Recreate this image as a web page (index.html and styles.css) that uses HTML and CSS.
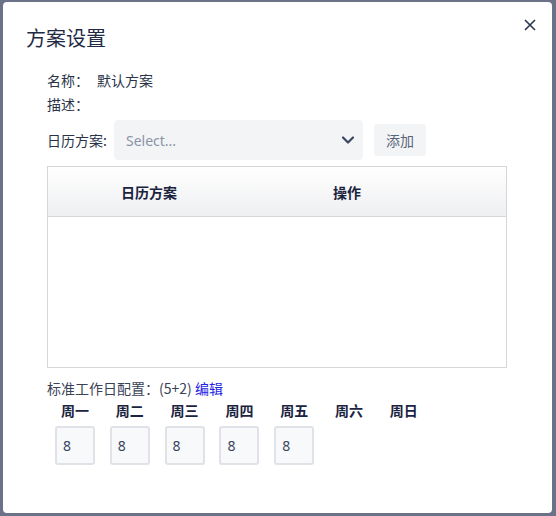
FILE: index.html
```html
<!DOCTYPE html>
<html lang="zh">
<head>
<meta charset="utf-8">
<link rel="stylesheet" href="styles.css">
</head>
<body>
<div class="modal">
  <button class="close" aria-label="close">
    <svg width="12" height="12" viewBox="0 0 12 12"><path d="M1 1L11 11M11 1L1 11" stroke="#2b3550" stroke-width="1.6" fill="none"/></svg>
  </button>
  <h2 class="title">方案设置</h2>
  <div class="body">
    <div class="line"><span class="lbl">名称：</span><span class="val">默认方案</span></div>
    <div class="line"><span class="lbl">描述：</span></div>
    <div class="select-row">
      <span class="lbl2">日历方案:</span>
      <div class="select">
        <span class="placeholder">Select...</span>
        <svg width="14" height="10" viewBox="0 0 14 10"><path d="M2 2.5L7 7.5L12 2.5" stroke="#3a4560" stroke-width="2.2" fill="none" stroke-linecap="round" stroke-linejoin="round"/></svg>
      </div>
      <button class="add">添加</button>
    </div>
    <div class="table">
      <div class="thead">
        <div class="th th1">日历方案</div>
        <div class="th th2">操作</div>
      </div>
      <div class="tbody"></div>
    </div>
    <div class="config">标准工作日配置：(5+2) <a class="edit">编辑</a></div>
    <div class="days">
      <div class="day"><div class="dlabel">周一</div><div class="box">8</div></div>
      <div class="day"><div class="dlabel">周二</div><div class="box">8</div></div>
      <div class="day"><div class="dlabel">周三</div><div class="box">8</div></div>
      <div class="day"><div class="dlabel">周四</div><div class="box">8</div></div>
      <div class="day"><div class="dlabel">周五</div><div class="box">8</div></div>
      <div class="day"><div class="dlabel">周六</div></div>
      <div class="day"><div class="dlabel">周日</div></div>
    </div>
  </div>
</div>
</body>
</html>
```

FILE: styles.css
```css
* { box-sizing: border-box; }
html, body { margin: 0; padding: 0; }
body {
  background: #6b7287;
  width: 556px;
  height: 516px;
  overflow: hidden;
  font-family: "Noto Sans", "Noto Sans CJK SC", sans-serif;
  color: #1f2a44;
}
.modal {
  position: relative;
  margin: 2px 0 0 3px;
  width: 549px;
  height: 511px;
  background: #fff;
  border-radius: 4px;
  padding-top: 22px;
}
.close {
  position: absolute;
  top: 17px;
  right: 16px;
  width: 12px;
  height: 12px;
  padding: 0;
  border: 0;
  background: none;
  display: flex;
}
.title {
  margin: 0 0 0 23px;
  font-size: 20px;
  line-height: 28px;
  font-weight: 400;
  color: #1f2a44;
  font-family: "Noto Sans CJK SC", sans-serif;
}
.body {
  padding: 16px 0 0 44px;
  font-size: 14px;
  font-family: "Noto Sans CJK SC", sans-serif;
}
.line {
  height: 24px;
  line-height: 24px;
  display: flex;
  color: #2a3348;
}
.lbl { width: 50px; }
.select-row {
  margin-top: 4px;
  display: flex;
  align-items: center;
  height: 40px;
}
.lbl2 { width: 67px; color: #2a3348; }
.select {
  width: 249px;
  height: 40px;
  background: #f3f4f6;
  border-radius: 4px;
  display: flex;
  align-items: center;
  justify-content: space-between;
  padding: 0 8px 0 12px;
}
.placeholder {
  color: #8a93a6;
  font-family: "Noto Sans", sans-serif;
  font-size: 14px;
}
.add {
  margin-left: 11px;
  width: 52px;
  height: 32px;
  border: 0;
  border-radius: 3px;
  background: #f3f4f6;
  color: #5a6478;
  font-size: 14px;
  font-family: "Noto Sans CJK SC", sans-serif;
  padding: 0;
}
.table {
  margin-top: 6px;
  width: 460px;
  height: 202px;
  border: 1px solid #d6d6d6;
  display: flex;
  flex-direction: column;
}
.thead {
  height: 50px;
  border-bottom: 1px solid #d6d6d6;
  background: linear-gradient(#ffffff, #eeeff1);
  display: flex;
  align-items: center;
}
.th {
  font-weight: 700;
  font-size: 14px;
  color: #1a2440;
}
.th1 { padding-left: 73px; width: 285px; }
.th2 { padding-left: 0; }
.tbody { flex: 1; }
.config {
  margin-top: 10px;
  line-height: 20px;
  color: #3a4256;
}
.edit { color: #2323e6; }
.days {
  margin-top: 2px;
  padding-left: 8px;
  display: flex;
  gap: 14.8px;
}
.day {
  width: 40px;
  display: flex;
  flex-direction: column;
  align-items: center;
}
.dlabel {
  font-weight: 700;
  font-size: 14px;
  line-height: 20px;
  color: #1a2440;
  white-space: nowrap;
}
.box {
  margin-top: 6px;
  width: 40px;
  height: 39px;
  border: 2px solid #e0e2e7;
  border-radius: 3px;
  background: #f8f9fb;
  font-family: "Noto Sans", sans-serif;
  font-size: 14px;
  color: #3a4560;
  padding-left: 6px;
  line-height: 35px;
  align-self: flex-start;
}
```
